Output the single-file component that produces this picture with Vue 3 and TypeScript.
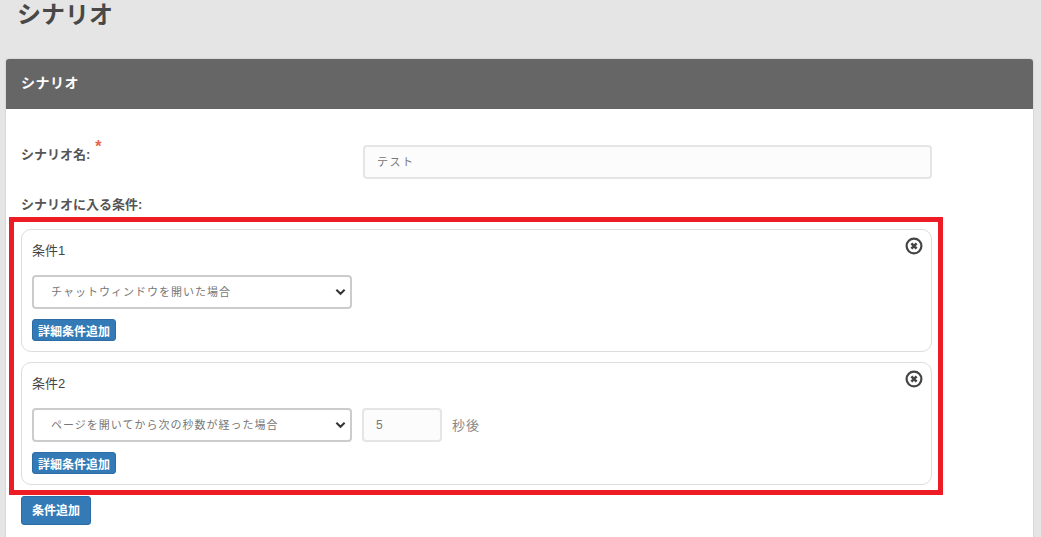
<script setup lang="ts">
interface Condition {
  title: string
  value: string
  seconds?: string
}
const conditions: Condition[] = [
  { title: '条件1', value: 'チャットウィンドウを開いた場合' },
  { title: '条件2', value: 'ページを開いてから次の秒数が経った場合', seconds: '5' },
]
</script>

<template>
  <div class="page">
    <h1 class="page-title">シナリオ</h1>
    <section class="panel">
      <header class="panel-head">シナリオ</header>
      <div class="panel-body">
        <div class="name-row">
          <label class="label name-label">シナリオ名:<span class="req">*</span></label>
          <input class="text-input" type="text" value="テスト" />
        </div>
        <div class="label cond-label">シナリオに入る条件:</div>
        <div class="cards">
          <div v-for="c in conditions" :key="c.title" class="card">
            <div class="card-title">{{ c.title }}</div>
            <svg class="close" viewBox="0 0 18 18" width="18" height="18" aria-hidden="true">
              <circle cx="9" cy="9" r="7.4" fill="#fff" stroke="#444" stroke-width="2.2" />
              <path d="M6.4 6.4 11.6 11.6M11.6 6.4 6.4 11.6" stroke="#444" stroke-width="2.6" fill="none" />
            </svg>
            <div class="control-row">
              <div class="select">
                <span>{{ c.value }}</span>
                <svg class="chev" viewBox="0 0 12 8" width="11" height="8" aria-hidden="true">
                  <path d="M1.5 1.5 6 6l4.5-4.5" fill="none" stroke="#333" stroke-width="2.2" />
                </svg>
              </div>
              <template v-if="c.seconds">
                <input class="sec-input" type="text" :value="c.seconds" />
                <span class="sec-unit">秒後</span>
              </template>
            </div>
            <button class="btn btn-sm" type="button">詳細条件追加</button>
          </div>
        </div>
        <button class="btn btn-add" type="button">条件追加</button>
      </div>
    </section>
    <div class="highlight"></div>
  </div>
</template>

<style>
html, body { margin: 0; background: #e5e5e5; overflow: hidden; }
</style>

<style scoped>
.page {
  position: relative;
  height: 537px;
  overflow: hidden;
  background: #e5e5e5;
  font-family: "Liberation Sans", "Noto Sans CJK JP", sans-serif;
  color: #444;
  box-sizing: border-box;
  padding: 0 8px 0 6px;
}
.page-title {
  margin: 0;
  height: 59px;
  padding: 0 0 0 11px;
  font-size: 24px;
  line-height: 30px;
  font-weight: 700;
  letter-spacing: 0;
  color: #484848;
}
.panel {
  background: #fff;
  border-radius: 3px 3px 0 0;
  height: 478px;
  box-shadow: 0 0 2px rgba(0, 0, 0, 0.2);
}
.panel-head {
  height: 50px;
  background: #666;
  color: #fff;
  font-size: 14px;
  font-weight: 700;
  line-height: 49px;
  padding-left: 15px;
  letter-spacing: 0.5px;
  border-radius: 3px 3px 0 0;
}
.panel-body { padding: 36px 101px 0 15px; }
.name-row { display: flex; align-items: flex-start; }
.label { font-size: 13px; font-weight: 700; color: #555; }
.name-label { width: 342px; line-height: 20px; }
.req {
  position: relative;
  top: -7px;
  color: #e8634a;
  font-size: 16px;
  margin-left: 5px;
  line-height: 0;
}
.text-input {
  box-sizing: border-box;
  width: 569px;
  height: 34px;
  border: 2px solid #e5e5e5;
  border-radius: 4px;
  background: #fcfcfc;
  padding: 0 12px 2px;
  font: 11px "Liberation Sans", "Noto Sans CJK JP", sans-serif;
  color: #777;
  letter-spacing: 1.5px;
  outline: none;
}
.cond-label { margin-top: 17px; line-height: 18px; }
.cards { margin-top: 15px; display: flex; flex-direction: column; gap: 10px; }
.card {
  position: relative;
  box-sizing: border-box;
  height: 123px;
  border: 1px solid #ddd;
  border-radius: 10px;
  padding: 12px 10px 0;
}
.card-title { font-size: 13px; line-height: 18px; color: #444; }
.close { position: absolute; top: 7px; right: 8px; }
.control-row { display: flex; align-items: center; margin-top: 15px; }
.select {
  box-sizing: border-box;
  width: 320px;
  height: 34px;
  border: 2px solid #ccc;
  border-radius: 4px;
  background: #fff;
  display: flex;
  align-items: center;
  justify-content: space-between;
  padding: 0 4px 2px 17px;
  font-size: 11px;
  letter-spacing: 1px;
  color: #777;
}
.chev { flex: none; margin-top: 2px; }
.sec-input {
  box-sizing: border-box;
  width: 80px;
  height: 34px;
  margin-left: 10px;
  border: 2px solid #e5e5e5;
  border-radius: 4px;
  background: #fcfcfc;
  padding: 0 12px;
  font: 12px "Liberation Sans", "Noto Sans CJK JP", sans-serif;
  color: #777;
  outline: none;
}
.sec-unit { margin-left: 10px; padding-bottom: 2px; font-size: 13px; color: #888; letter-spacing: 1px; }
.btn {
  display: block;
  background: #337ab7;
  color: #fff;
  border: 1px solid #2e6da4;
  font-family: inherit;
  font-weight: 700;
  padding: 0;
  cursor: pointer;
}
.btn-sm {
  width: 84px;
  height: 22px;
  margin-top: 10px;
  font-size: 12px;
  border-radius: 3px;
}
.btn-add {
  width: 70px;
  height: 29px;
  margin-top: 11px;
  padding-bottom: 2px;
  font-size: 12px;
  border-radius: 3px;
}
.highlight {
  position: absolute;
  left: 9px;
  top: 217px;
  width: 934px;
  height: 278px;
  box-sizing: border-box;
  border: 5px solid #ed1c24;
  pointer-events: none;
}
</style>
